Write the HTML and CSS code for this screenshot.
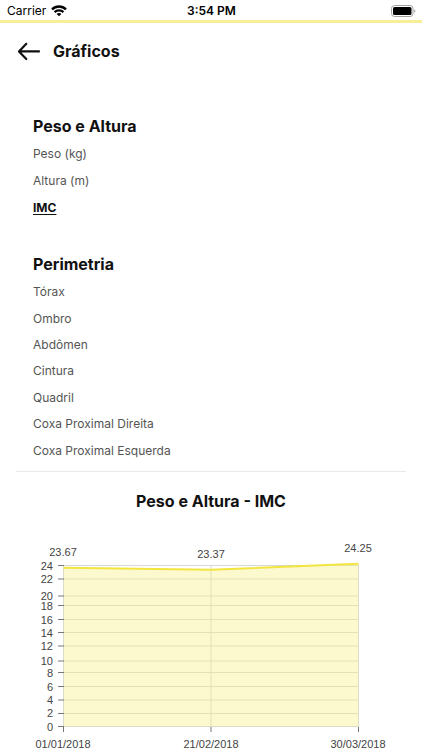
FILE: index.html
```html
<!DOCTYPE html>
<html lang="pt-BR">
<head>
<meta charset="utf-8">
<meta name="viewport" content="width=device-width, initial-scale=1">
<title>Gráficos</title>
<link rel="stylesheet" href="styles.css">
</head>
<body>
<div class="status">
  <div class="carrier">
    <span>Carrier</span>
    <svg width="16" height="12" viewBox="0 0 16 12" aria-hidden="true">
      <g fill="none" stroke="#000" stroke-width="2.3">
        <path d="M1 4.4C5 .5 11 .5 15 4.4"/>
        <path d="M3.6 7.1C6.1 4.7 9.9 4.7 12.4 7.1"/>
      </g>
      <path d="M5.6 8.9C7 7.7 9 7.7 10.4 8.9L8 11.3Z"/>
    </svg>
  </div>
  <span class="time">3:54 PM</span>
  <svg class="battery" width="25" height="12" viewBox="0 0 25 12" aria-hidden="true">
    <rect x=".5" y=".5" width="21.5" height="11" rx="3" fill="none" stroke="#a2a2a2"/>
    <rect x="2" y="2" width="18.5" height="8" rx="1.6"/>
    <path d="M23.2 4.2C24.8 4.6 24.8 7.4 23.2 7.8Z" fill="#a2a2a2"/>
  </svg>
</div>
<header class="header">
  <button class="back" type="button" aria-label="Voltar">
    <svg width="24" height="20" viewBox="0 0 24 20" fill="none" stroke="#111" stroke-width="2.2" stroke-linecap="round" stroke-linejoin="round" aria-hidden="true">
      <path d="M22 10.4H2.2M9.3 2.8L2 10.4L9.3 18"/>
    </svg>
  </button>
  <h1>Gráficos</h1>
</header>
<main>
  <nav class="menu" aria-label="Medidas">
    <section>
      <h2>Peso e Altura</h2>
      <ul class="list">
        <li><a href="#peso">Peso (kg)</a></li>
        <li><a href="#altura">Altura (m)</a></li>
        <li><a class="active" href="#grafico" aria-current="true">IMC</a></li>
      </ul>
    </section>
    <section>
      <h2>Perimetria</h2>
      <ul class="list list-long">
        <li><a href="#torax">Tórax</a></li>
        <li><a href="#ombro">Ombro</a></li>
        <li><a href="#abdomen">Abdômen</a></li>
        <li><a href="#cintura">Cintura</a></li>
        <li><a href="#quadril">Quadril</a></li>
        <li><a href="#coxa-direita">Coxa Proximal Direita</a></li>
        <li><a href="#coxa-esquerda">Coxa Proximal Esquerda</a></li>
      </ul>
    </section>
  </nav>
  <section class="report" id="grafico">
    <h2>Peso e Altura - IMC</h2>
    <svg class="chart" viewBox="0 0 422 230" role="img" aria-label="IMC por data">
      <g class="grid">
        <path d="M64 45.5H358M64 59H358M64 76H358M64 85.5H358M64 99.5H358M64 112.5H358M64 126H358M64 141H358M64 152.5H358M64 166.5H358M64 180H358M64 193.5H358M64 206.5H358"/>
        <path d="M63.5 45V207M211 45V207M358.5 45V207"/>
      </g>
      <path class="area" d="M63.5 48L211 50L358.5 44V206.5H63.5Z"/>
      <path class="line" d="M63.5 47.8L211 49.8L358.5 43.8"/>
      <path class="ticks" d="M58 45.5H64M58 59H64M58 76H64M58 85.5H64M58 99.5H64M58 112.5H64M58 126H64M58 141H64M58 152.5H64M58 166.5H64M58 180H64M58 193.5H64M58 206.5H64M63.5 207V212M211 207V212M358.5 207V212"/>
      <g class="y-labels">
        <text x="53" y="50">24</text>
        <text x="53" y="63">22</text>
        <text x="53" y="80">20</text>
        <text x="53" y="90">18</text>
        <text x="53" y="104">16</text>
        <text x="53" y="117">14</text>
        <text x="53" y="130">12</text>
        <text x="53" y="145">10</text>
        <text x="53" y="157">8</text>
        <text x="53" y="171">6</text>
        <text x="53" y="184">4</text>
        <text x="53" y="197">2</text>
        <text x="53" y="211">0</text>
      </g>
      <g class="x-labels">
        <text x="63" y="36">23.67</text>
        <text x="211" y="38">23.37</text>
        <text x="358" y="32">24.25</text>
        <text x="63" y="228">01/01/2018</text>
        <text x="211" y="228">21/02/2018</text>
        <text x="358" y="228">30/03/2018</text>
      </g>
    </svg>
  </section>
</main>
</body>
</html>
```
FILE: styles.css
```css
* {
  box-sizing: border-box;
}

body {
  margin: 0;
  background: #fff;
  color: #111;
  font-family: Inter, "Liberation Sans", sans-serif;
}

h1,
h2,
ul {
  margin: 0;
  padding: 0;
}

h1,
h2 {
  font-size: 16px;
  font-weight: 700;
  line-height: 24px;
}

.status {
  display: grid;
  grid-template-columns: 1fr auto 1fr;
  align-items: center;
  padding: 1px 6px 0 7px;
  border-bottom: 3px solid #f8ee9a;
  color: #000;
  font-size: 12px;
  line-height: 19px;
}

.carrier {
  display: flex;
  align-items: center;
  gap: 5px;
}

.time {
  font-weight: 600;
}

.battery {
  justify-self: end;
}

.header {
  display: flex;
  align-items: center;
  gap: 12px;
  height: 56px;
  padding: 0 17px;
}

.back {
  display: flex;
  padding: 0;
  border: 0;
  background: none;
  cursor: pointer;
}

.menu {
  display: flex;
  flex-direction: column;
  gap: 31px;
  margin: 0 16px;
  padding: 35px 17px 7px;
  border-bottom: 1px solid #eaeaea;
}

.list {
  display: grid;
  grid-auto-rows: 1fr;
  align-items: center;
  min-height: 80px;
  margin-top: 3px;
  list-style: none;
  font-size: 12px;
  line-height: 20px;
}

.list-long {
  min-height: 185px;
}

.list a {
  color: #555;
  text-decoration: none;
}

.list .active {
  color: #111;
  font-weight: 700;
  text-decoration: underline;
  text-underline-offset: 2px;
}

.report {
  padding-top: 17px;
  text-align: center;
}

.chart {
  display: block;
  width: 100%;
  margin-top: 7px;
  font-family: "Liberation Sans", Arial, sans-serif;
  font-size: 11px;
  fill: #444;
}

.grid {
  fill: none;
  stroke: #d8d8d8;
}

.area {
  fill: #fbf086;
  fill-opacity: 0.4;
}

.line {
  fill: none;
  stroke: #f2e53f;
  stroke-width: 2;
}

.ticks {
  fill: none;
  stroke: #777;
}

.y-labels {
  text-anchor: end;
}

.x-labels {
  text-anchor: middle;
}
```
